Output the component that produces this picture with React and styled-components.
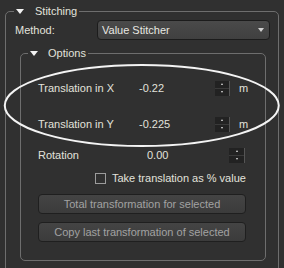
import React from "react"
import styled, { createGlobalStyle } from "styled-components"

const GlobalStyle = createGlobalStyle`
  html, body {
    margin: 0;
    padding: 0;
    background: #303030;
    overflow: hidden;
  }
  * {
    box-sizing: border-box;
  }
`

const Page = styled.div`
  position: relative;
  width: 284px;
  height: 268px;
  padding: 4px 5px 0 5px;
  overflow: hidden;
  background: #303030;
  color: #e2e2dc;
  font-family: "Liberation Sans", Arial, sans-serif;
  font-size: 11px;
`

const Group = styled.fieldset`
  margin: ${(p) => p.$margin || "0"};
  padding: ${(p) => p.$padding || "0"};
  border: 1px solid #6e6e6e;
  border-radius: 5px;
  min-width: 0;
  min-height: ${(p) => p.$minHeight || "auto"};
`

const Legend = styled.legend`
  display: flex;
  align-items: center;
  height: 14px;
  margin-left: -1px;
  padding: 0 2px 0 2px;
  line-height: 14px;
`

const Caret = styled.span`
  width: 0;
  height: 0;
  border-left: 4px solid transparent;
  border-right: 4px solid transparent;
  border-top: 5px solid #f2f2f2;
  margin-right: ${(p) => p.$gap || 11}px;
`

const MethodRow = styled.div`
  display: flex;
  align-items: center;
  height: 20px;
`

const Label = styled.span`
  width: ${(p) => p.$width}px;
  flex-shrink: 0;
  white-space: nowrap;
`

const Combo = styled.div`
  flex: 1;
  height: 20px;
  display: flex;
  align-items: center;
  justify-content: space-between;
  padding: 0 5px 0 4px;
  border: 1px solid #1c1c1c;
  border-radius: 4px;
  background: linear-gradient(#4a4a4a, #404040);
  color: #e8e8e2;
`

const ComboArrow = styled.span`
  width: 0;
  height: 0;
  border-left: 3.5px solid transparent;
  border-right: 3.5px solid transparent;
  border-top: 4px solid #d0d0d0;
`

const Body = styled.div`
  padding-left: 9px;
  display: flex;
  flex-direction: column;
`

const Row = styled.div`
  display: flex;
  align-items: center;
  height: 16px;
  margin-top: ${(p) => p.$mt}px;
  padding-left: ${(p) => p.$pl || 0}px;
`

const Value = styled.span`
  width: ${(p) => p.$width}px;
  flex-shrink: 0;
`

const Spinner = styled.div`
  width: ${(p) => p.$width || 15}px;
  height: 15px;
  display: flex;
  flex-direction: column;
  gap: 1px;
  border-right: 1px solid #555;
  background: #3a3a3a;
`

const SpinHalf = styled.div`
  flex: 1;
  display: flex;
  align-items: center;
  justify-content: center;
  background: #222;
  &::after {
    content: "";
    border-left: 1.5px solid transparent;
    border-right: 1.5px solid transparent;
    ${(p) => (p.$down ? "border-top" : "border-bottom")}: 2px solid #e0e0e0;
  }
`

const Unit = styled.span`
  margin-left: 9px;
`

const CheckBox = styled.span`
  width: 11px;
  height: 11px;
  border: 1px solid #9c9c9c;
  margin-right: 6px;
`

const Button = styled.div`
  width: 208px;
  height: 20px;
  margin-top: ${(p) => p.$mt}px;
  display: flex;
  align-items: center;
  justify-content: center;
  border: 1px solid #1f1f1f;
  border-radius: 4px;
  background: linear-gradient(#444444, #3b3b3b);
  color: #a2a2a2;
  white-space: nowrap;
`

const Annotation = styled.svg`
  position: absolute;
  left: 0;
  top: 0;
  pointer-events: none;
`

export default function App() {
  return (
    <Page>
      <GlobalStyle />
      <Group $padding="2px 8px 0 9px" $minHeight="300px">
        <Legend>
          <Caret />
          Stitching
        </Legend>
        <MethodRow>
          <Label $width={82}>Method:</Label>
          <Combo>
            <span>Value Stitcher</span>
            <ComboArrow />
          </Combo>
        </MethodRow>
        <Group $margin="6px 4px 0 5px" $padding="0 0 18px 8px">
          <Legend>
            <Caret $gap={10} />
            Options
          </Legend>
          <Body>
            <Row $mt={20}>
              <Label $width={101}>Translation in X</Label>
              <Value $width={76}>-0.22</Value>
              <Spinner>
                <SpinHalf />
                <SpinHalf $down />
              </Spinner>
              <Unit>m</Unit>
            </Row>
            <Row $mt={20}>
              <Label $width={101}>Translation in Y</Label>
              <Value $width={76}>-0.225</Value>
              <Spinner>
                <SpinHalf />
                <SpinHalf $down />
              </Spinner>
              <Unit>m</Unit>
            </Row>
            <Row $mt={15}>
              <Label $width={109}>Rotation</Label>
              <Value $width={82}>0.00</Value>
              <Spinner $width={16}>
                <SpinHalf />
                <SpinHalf $down />
              </Spinner>
            </Row>
            <Row $mt={7} $pl={57}>
              <CheckBox />
              Take translation as % value
            </Row>
            <Button $mt={8}>Total transformation for selected</Button>
            <Button $mt={8}>Copy last transformation of selected</Button>
          </Body>
        </Group>
      </Group>
      <Annotation width="284" height="268" viewBox="0 0 284 268">
        <ellipse cx="141.75" cy="105.5" rx="137" ry="40.5" fill="none" stroke="#f4f4f4" strokeWidth="2" />
      </Annotation>
    </Page>
  )
}
